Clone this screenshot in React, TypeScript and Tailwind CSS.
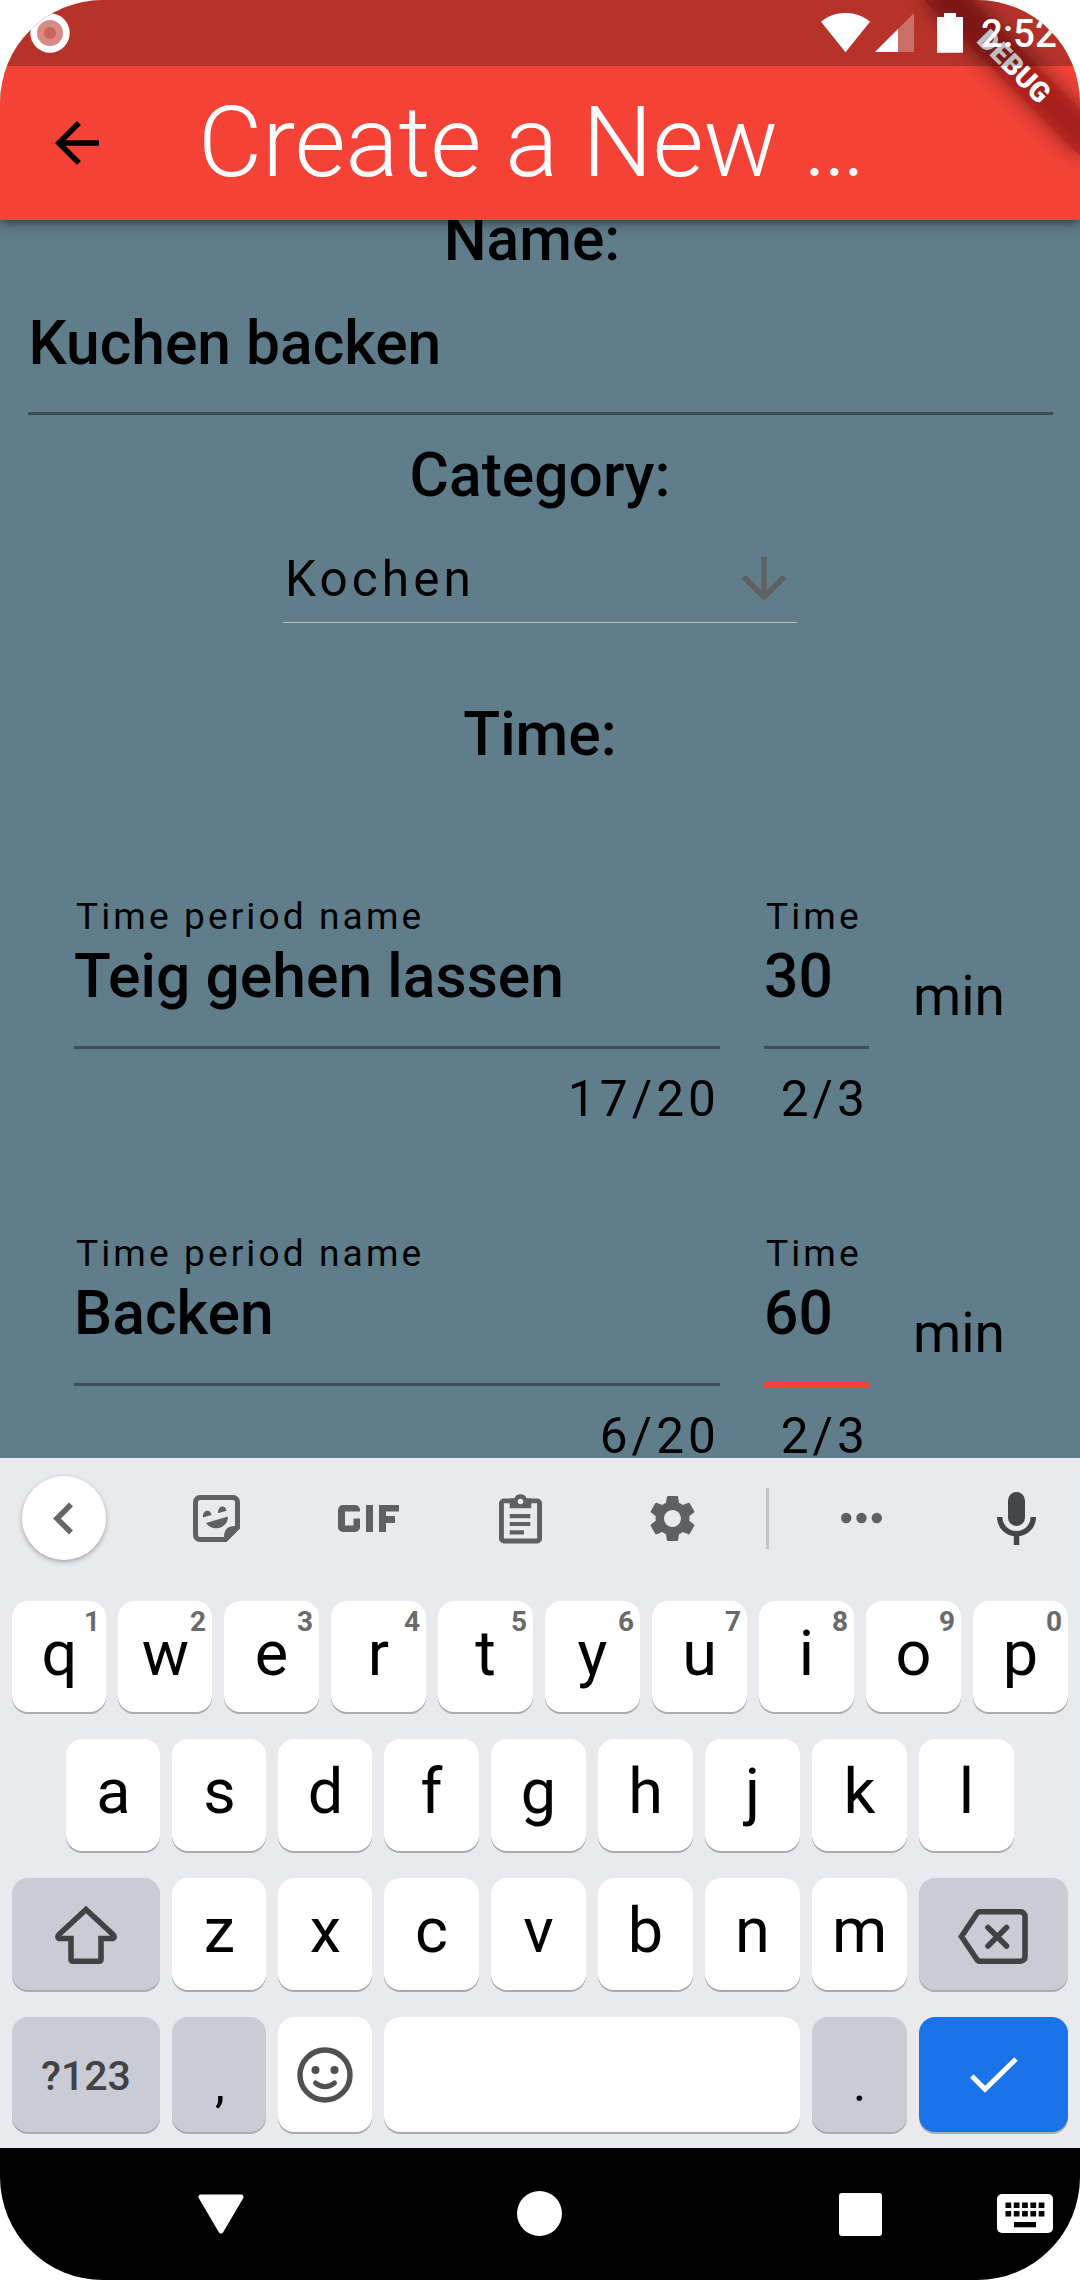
import type { ReactNode } from 'react';

type IconProps = { className?: string };

const ArrowBack = ({ className }: IconProps) => (
  <svg viewBox="0 0 24 24" fill="currentColor" className={className}>
    <path d="M20 11H7.83l5.59-5.59L12 4l-8 8 8 8 1.41-1.41L7.83 13H20v-2z" />
  </svg>
);

const ArrowDown = ({ className }: IconProps) => (
  <svg viewBox="0 0 24 24" fill="currentColor" className={className}>
    <path d="M20 12l-1.41-1.41L13 16.17V4h-2v12.17l-5.58-5.59L4 12l8 8 8-8z" />
  </svg>
);

function StatusBar() {
  return (
    <div className="absolute inset-x-0 top-0 z-30 flex h-[66px] items-start bg-black/25 text-white">
      <svg viewBox="0 0 40 40" className="mt-[13px] ml-[30px] size-10">
        <circle cx="20" cy="20" r="19.7" fill="#fff" />
        <circle cx="20" cy="20" r="13" fill="#d88a85" />
        <circle cx="20" cy="20" r="6" fill="#ca645e" />
      </svg>
      <svg viewBox="0 0 49 40" className="mt-[13px] ml-[751px] h-10 w-[49px]">
        <path d="M24.5 39.3 0 8.8C6.500 3 15 0 24.500 0S42.500 3 49 8.800z" fill="#fff" />
      </svg>
      <svg viewBox="0 0 39 40" className="mt-[13px] ml-[5px] h-10 w-[39px]">
        <path d="M0 39 39 0v39z" fill="#fff" fillOpacity=".3" />
        <path d="M0 39 23 16v23z" fill="#fff" />
      </svg>
      <svg viewBox="0 0 26 40" className="mt-[13px] ml-[23px] h-10 w-[26px]">
        <path d="M7 0h12v4h7v35.700H0V4h7z" fill="#fff" />
      </svg>
      <span className="mt-[12px] ml-[18px] text-[38.5px] leading-[44px] font-medium">2:52</span>
    </div>
  );
}

function AppBar() {
  return (
    <header className="relative z-10 flex h-[220px] shrink-0 items-center bg-[#f44336] pt-[66px] shadow-[0_5px_11px_rgba(0,0,0,0.3),0_2px_6px_rgba(0,0,0,0.2)]">
      <ArrowBack className="ml-11 size-[66px] text-black" />
      <h1 className="ml-[88px] pb-[2px] text-[99px] leading-[116px] font-light tracking-[-0.12px] whitespace-nowrap text-white">
        Create a New …
      </h1>
    </header>
  );
}

function DebugBanner() {
  return (
    <div className="absolute top-[49.500px] left-[904px] z-20 h-[33px] w-[220px] rotate-45">
      <div className="absolute inset-0 bg-black/50 blur-[10.900px]" />
      <div className="relative flex h-full items-center justify-center bg-[#b71c1c]/63 text-[28px] leading-none font-black text-white">
        DEBUG
      </div>
    </div>
  );
}

const Heading = ({ children, className }: { children: ReactNode; className?: string }) => (
  <h2 className={`text-center text-[60.5px] leading-[71px] font-medium ${className ?? ''}`}>{children}</h2>
);

type FieldProps = { label: string; value: string; counter: string; className: string; focused?: boolean };

function Field({ label, value, counter, className, focused }: FieldProps) {
  return (
    <div className={`flex flex-col ${className}`}>
      <div className="ml-[2px] text-[37.1px] leading-[46px] tracking-[3.1px] whitespace-nowrap">{label}</div>
      <div className="mt-[1px] text-[60.5px] leading-[71px] font-medium tracking-[0.060px] whitespace-nowrap">{value}</div>
      <div className="flex h-[37px] items-end">
        <div className={focused ? '-mb-[2px] h-[6px] w-full bg-[#f44336]' : 'h-[3px] w-full bg-black/38'} />
      </div>
      <div className="mt-[21px] text-right text-[49.5px] leading-[58px] tracking-[4.1px]">{counter}</div>
    </div>
  );
}

type PeriodProps = { name: string; count: string; time: string; focused?: boolean; className: string };

function PeriodRow({ name, count, time, focused, className }: PeriodProps) {
  return (
    <div className={`flex items-start pl-[74px] ${className}`}>
      <Field label="Time period name" value={name} counter={count} className="w-[646px]" />
      <Field label="Time" value={time} counter="2/3" className="ml-11 w-[105px]" focused={focused} />
      <span className="mt-[70px] ml-11 text-[55px] leading-[64px]">min</span>
    </div>
  );
}

function Form() {
  return (
    <main className="h-[1238px] shrink-0 overflow-hidden bg-[#607d8b] text-black">
      <div className="-mt-4">
        <Heading className="pr-[16px]">Name:</Heading>
        <div className="mx-[27.500px] mt-[33px] border-b-[3px] border-black/38 pb-[33px] pl-[1px] text-[60.5px] leading-[71px] font-medium">
          Kuchen backen
        </div>
        <Heading className="mt-[25px]">Category:</Heading>
        <div className="mt-[39px] ml-[283px] flex h-[73px] w-[514px] items-start justify-between border-b border-[#bdbdbd] pl-[2px]">
          <span className="text-[49.5px] leading-[58px] tracking-[4.1px]">Kochen</span>
          <ArrowDown className="-mt-1 size-[66px] text-[#616161]" />
        </div>
        <Heading className="mt-[76px]">Time:</Heading>
        <PeriodRow name="Teig gehen lassen" count="17/20" time="30" className="mt-[124px]" />
        <PeriodRow name="Backen" count="6/20" time="60" focused className="mt-[103px]" />
      </div>
    </main>
  );
}

function Toolbar() {
  return (
    <div className="flex h-[120px] items-center text-[#5f6062]">
      <div className="ml-[22px] flex size-[84px] items-center justify-center rounded-full bg-white pr-[2px] shadow-[0_2px_5px_rgba(0,0,0,0.3)]">
        <svg viewBox="0 0 21 33" className="h-[33px] w-[21px]">
          <path d="M18 2.500 4 16.500l14 14" fill="none" stroke="#666" strokeWidth="5.500" />
        </svg>
      </div>
      <svg viewBox="0 0 47 47" className="ml-[87px] size-[47px]">
        <path d="M7 2.500h33a4.500 4.500 0 0 1 4.500 4.500v25.500l-12 12H7A4.500 4.500 0 0 1 2.500 40V7A4.500 4.500 0 0 1 7 2.500z" fill="none" stroke="currentColor" strokeWidth="5" />
        <path d="M47 31H43Q31 30.500 31 42v5h2l14-14zM10 22.500c-1-8 8-9 8.500-2.500zM25 18.200c-.5-8 8-9 8.500-2.500zM13 28l22-6.500C35 34 19 37 13 28z" fill="currentColor" />
      </svg>
      <svg viewBox="0 0 61 27" className="ml-[98px] h-[27px] w-[61px]">
        <path d="M5 0h12a5 5 0 0 1 5 5v1.500H7v14h8.500V13.500H22V22a5 5 0 0 1-5 5H5a5 5 0 0 1-5-5V5a5 5 0 0 1 5-5zM28 0h7v27h-7zM41 0h20v6.500H48V11h9v7h-9v9h-7z" fill="currentColor" />
      </svg>
      <svg viewBox="0 0 44 51" className="ml-[100px] h-[51px] w-[43px]">
        <path d="M5 7.500h34a2.500 2.500 0 0 1 2.500 2.500v36a2.500 2.500 0 0 1-2.500 2.500H5A2.500 2.500 0 0 1 2.500 46V10A2.500 2.500 0 0 1 5 7.500z" fill="none" stroke="currentColor" strokeWidth="5" />
        <path d="M11 5h4.500a7 7 0 0 1 13 0H33v10H11zM11 21h21v4.300H11zM11 29h21v4.300H11zM11 37.500h14.500v4.300H11z" fill="currentColor" />
        <circle cx="22" cy="8" r="2.800" fill="#e8eaed" />
      </svg>
      <svg viewBox="2 2 20 20" className="ml-[107px] size-[47px]">
        <path fill="currentColor" d="M19.140 12.940c.04-.3.060-.610.060-.940 0-.320-.020-.640-.070-.940l2.030-1.580c.180-.140.230-.410.120-.610l-1.920-3.320c-.120-.220-.370-.290-.590-.220l-2.390.960c-.500-.380-1.030-.700-1.620-.940l-.360-2.540c-.040-.240-.240-.410-.480-.410h-3.840c-.240 0-.430.170-.470.410l-.360 2.540c-.590.240-1.130.570-1.620.940l-2.390-.960c-.220-.080-.470 0-.590.220L2.740 8.870c-.120.210-.080.470.120.610l2.030 1.580c-.05.3-.09.630-.09.940s.020.640.070.940l-2.030 1.580c-.180.140-.230.410-.120.610l1.920 3.320c.120.220.370.290.590.220l2.390-.960c.500.380 1.030.700 1.620.940l.360 2.540c.050.240.240.410.480.410h3.840c.240 0 .440-.170.470-.410l.360-2.540c.590-.240 1.130-.560 1.620-.940l2.390.960c.220.080.470 0 .590-.220l1.920-3.320c.120-.220.070-.470-.120-.610l-2.010-1.580zM12 15.600c-1.980 0-3.600-1.620-3.600-3.600s1.620-3.600 3.600-3.600 3.600 1.620 3.600 3.600-1.620 3.600-3.600 3.600z" />
      </svg>
      <div className="ml-[70px] h-[61px] w-[3px] bg-[#c3c4c8]" />
      <svg viewBox="0 0 41 12" className="ml-[72px] h-3 w-[41px]" fill="currentColor">
        <circle cx="5.200" cy="6" r="5.200" />
        <circle cx="20.500" cy="6" r="5.200" />
        <circle cx="35.800" cy="6" r="5.200" />
      </svg>
      <svg viewBox="0 0 39 53" className="ml-[115px] h-[53px] w-[39px] text-[#454648]">
        <rect x="11" y="0" width="17" height="34" rx="8.500" fill="currentColor" />
        <path d="M2.700 25a16.800 16.800 0 0 0 33.600 0M19.500 42v11" fill="none" stroke="currentColor" strokeWidth="5.500" />
      </svg>
    </div>
  );
}

type KeyProps = { children?: ReactNode; hint?: string; className?: string };

const Key = ({ children, hint, className }: KeyProps) => (
  <div className={`relative flex shrink-0 justify-center rounded-[16px] text-[63px] leading-[74px] text-black shadow-[0_2px_0_#a9abae] ${className ?? ''}`}>
    {children}
    {hint && <span className="absolute top-[5px] right-[6px] text-[28px] leading-[32px] font-bold text-[#6a6a6a]">{hint}</span>}
  </div>
);

// The leading `narrow` keys of a row are one pixel narrower, so the row fills whole pixels.
function Letters({ letters, narrow, numbered }: { letters: string; narrow: number; numbered?: boolean }) {
  return letters.split('').map((letter, i) => (
    <Key
      key={letter}
      hint={numbered ? String((i + 1) % 10) : undefined}
      className={i < narrow ? 'w-[94px] bg-white pl-[1px]' : 'w-[95px] bg-white'}
    >
      <span className="mt-[16px]">{letter}</span>
    </Key>
  ));
}

function Keyboard() {
  return (
    <section className="flex h-[690px] shrink-0 flex-col bg-[#e8eaed]">
      <Toolbar />
      <div className="mt-[23px] flex h-[111px] gap-3 px-3">
        <Letters letters="qwertyuiop" narrow={2} numbered />
      </div>
      <div className="mt-[27px] flex h-[112px] gap-3 px-[66px]">
        <Letters letters="asdfghjkl" narrow={3} />
      </div>
      <div className="mt-[27px] flex h-[112px] gap-3 px-3">
        <Key className="w-[148px] items-center bg-[#caccd5] pr-[1px]">
          <svg viewBox="0 0 62 59" className="h-[59px] w-[62px]">
            <path d="M31 4.500 4 29.500c-2 2-1 4 1 4h11V54c0 1.500.8 2.300 2.300 2.300h25.400c1.500 0 2.300-.8 2.300-2.300V33.500h11c2 0 3-2 1-4z" fill="none" stroke="#414244" strokeWidth="5.600" />
          </svg>
        </Key>
        <Letters letters="zxcvbnm" narrow={2} />
        <Key className="w-[149px] items-center bg-[#caccd5] pr-[1px]">
          <svg viewBox="0 0 70 55" className="mt-[4px] h-[55px] w-[70px]" fill="none" stroke="#414244" strokeWidth="5.600">
            <path d="M22 2.800h40.500a4.500 4.500 0 0 1 4.500 4.500v40.400a4.500 4.500 0 0 1-4.500 4.500H22c-1.500 0-2.500-.8-3.500-2.200L3.500 27.500l15-22.500c1-1.400 2-2.200 3.500-2.200z" />
            <path d="m30 18.500 18.500 18.500M48.500 18.500 30 37" strokeLinecap="round" />
          </svg>
        </Key>
      </div>
      <div className="mt-[27px] flex h-[115px] gap-3 px-3">
        <Key className="w-[148px] bg-[#caccd5]">
          <span className="mt-[22px] text-[41px] font-medium text-[#414244]">?123</span>
        </Key>
        <Key className="w-[94px] bg-[#caccd5] pl-[2px]">
          <span className="mt-[30px] text-[50px]">,</span>
        </Key>
        <Key className="w-[94px] items-center bg-white">
          <svg viewBox="0 0 56 56" className="size-14">
            <circle cx="28" cy="28" r="25" fill="none" stroke="#505050" strokeWidth="5.400" />
            <circle cx="18.500" cy="23" r="4" fill="#505050" />
            <circle cx="37.500" cy="23" r="4" fill="#505050" />
            <path d="M18.500 36q9.500 7.500 19 0" fill="none" stroke="#505050" strokeWidth="5" strokeLinecap="round" />
          </svg>
        </Key>
        <Key className="w-[416px] bg-white" />
        <Key className="w-[95px] bg-[#caccd5]">
          <span className="mt-[30px] text-[50px]">.</span>
        </Key>
        <Key className="w-[149px] items-center bg-[#1a73e8]">
          <svg viewBox="0 0 48 36" className="h-9 w-12">
            <path d="m1.800 19 13.200 13.200L46 2" fill="none" stroke="#fff" strokeWidth="5" />
          </svg>
        </Key>
      </div>
    </section>
  );
}

function NavigationBar() {
  return (
    <nav className="flex h-[132px] shrink-0 items-center bg-black pb-[1px] text-white">
      <svg viewBox="0 0 46 40" className="ml-[198px] h-10 w-[46px]">
        <path d="M3 3h40L23 37z" fill="#fff" stroke="#fff" strokeWidth="5" strokeLinejoin="round" />
      </svg>
      <div className="ml-[273px] size-[45px] rounded-full bg-white" />
      <div className="mt-[2px] ml-[277px] size-[43px] rounded-[3px] bg-white" />
      <svg viewBox="0 0 56 39" className="ml-[115px] h-[39px] w-14">
        <rect width="56" height="39" rx="5" fill="#fff" />
        {[0, 1, 2, 3, 4].map((i) => (
          <g key={i} fill="#000">
            <rect x={8.5 + i * 8.3} y="8.500" width="5.700" height="5.500" />
            <rect x={8.5 + i * 8.3} y="17" width="5.700" height="5.500" />
          </g>
        ))}
        <rect x="17" y="28" width="22" height="5.300" fill="#000" />
      </svg>
    </nav>
  );
}

export default function App() {
  return (
    <div className="w-[1080px] bg-white font-[Roboto,sans-serif]">
      <div className="relative flex h-[2280px] flex-col overflow-hidden rounded-[103px]">
        <AppBar />
        <Form />
        <DebugBanner />
        <StatusBar />
        <Keyboard />
        <NavigationBar />
      </div>
    </div>
  );
}
